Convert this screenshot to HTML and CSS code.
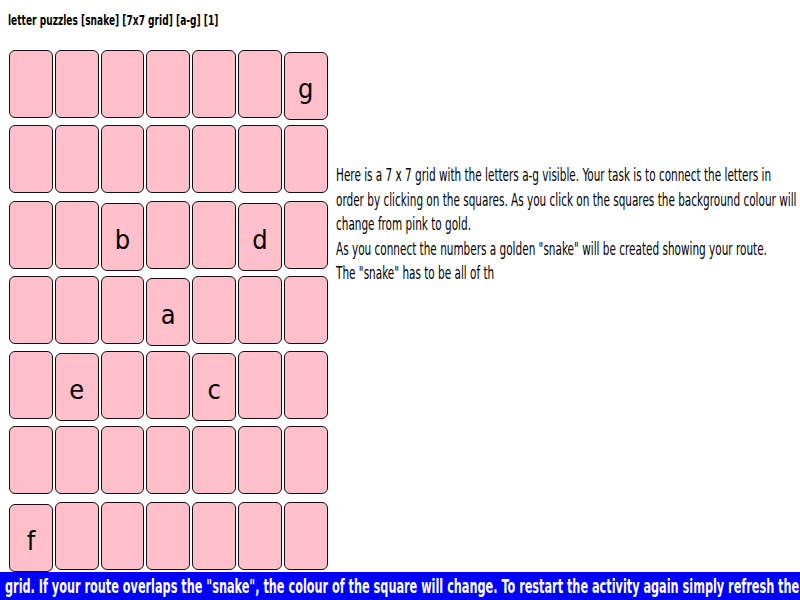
FILE: index.html
```html
<!DOCTYPE html>
<html lang="en">
<head>
<meta charset="utf-8">
<title>letter puzzles [snake] [7x7 grid] [a-g] [1]</title>
<link rel="stylesheet" href="styles.css">
</head>
<body>
<div class="page">
  <div class="content">
    <div class="title"><span class="title-text">letter puzzles [snake] [7x7 grid] [a-g] [1]</span></div>
    <div class="main">
      <div class="grid">
        <div class="row">
          <div class="cell"></div><div class="cell"></div><div class="cell"></div><div class="cell"></div><div class="cell"></div><div class="cell"></div><div class="cell letter">g</div>
        </div>
        <div class="row">
          <div class="cell"></div><div class="cell"></div><div class="cell"></div><div class="cell"></div><div class="cell"></div><div class="cell"></div><div class="cell"></div>
        </div>
        <div class="row">
          <div class="cell"></div><div class="cell"></div><div class="cell letter">b</div><div class="cell"></div><div class="cell"></div><div class="cell letter">d</div><div class="cell"></div>
        </div>
        <div class="row">
          <div class="cell"></div><div class="cell"></div><div class="cell"></div><div class="cell letter">a</div><div class="cell"></div><div class="cell"></div><div class="cell"></div>
        </div>
        <div class="row">
          <div class="cell"></div><div class="cell letter">e</div><div class="cell"></div><div class="cell"></div><div class="cell letter">c</div><div class="cell"></div><div class="cell"></div>
        </div>
        <div class="row">
          <div class="cell"></div><div class="cell"></div><div class="cell"></div><div class="cell"></div><div class="cell"></div><div class="cell"></div><div class="cell"></div>
        </div>
        <div class="row">
          <div class="cell letter">f</div><div class="cell"></div><div class="cell"></div><div class="cell"></div><div class="cell"></div><div class="cell"></div><div class="cell"></div>
        </div>
      </div>
      <div class="info">
        <div class="info-text">
          <p class="line">Here is a 7 x 7 grid with the letters a-g visible. Your task is to connect the letters in</p>
          <p class="line">order by clicking on the squares. As you click on the squares the background colour will</p>
          <p class="line">change from pink to gold.</p>
          <p class="line">As you connect the numbers a golden "snake" will be created showing your route.</p>
          <p class="line">The "snake" has to be all of th</p>
        </div>
      </div>
    </div>
  </div>
  <div class="ticker"><span class="ticker-text">grid. If your route overlaps the "snake", the colour of the square will change. To restart the activity again simply refresh the</span></div>
</div>
</body>
</html>
```

FILE: styles.css
```css
html, body {
  margin: 0;
  padding: 0;
  background: #ffffff;
}

.page {
  display: flex;
  flex-direction: column;
  height: 100vh;
  overflow: hidden;
}

.content {
  flex: 1;
  padding: 12px 0 0 8px;
}

.title {
  font-family: "DejaVu Sans Condensed", "Liberation Sans", sans-serif;
  font-weight: bold;
  font-size: 14px;
  line-height: 16px;
  color: #000;
  white-space: nowrap;
}

.title-text {
  display: inline-block;
  transform: scaleX(0.72);
  transform-origin: left center;
}

.main {
  display: flex;
  align-items: flex-start;
  margin-top: 22px;
}

.grid {
  display: flex;
  flex-direction: column;
  gap: 7.3px;
  margin-left: 1px;
}

.row {
  display: flex;
  align-items: flex-start;
  gap: 2px;
}

.cell {
  box-sizing: border-box;
  width: 43.8px;
  height: 68px;
  background: #ffc0cb;
  border: 1.6px solid #111;
  border-radius: 6px;
}

.letter {
  margin-top: 2px;
  margin-bottom: -2px;
  text-align: center;
  font-family: "DejaVu Sans Condensed", "Liberation Sans", sans-serif;
  font-size: 27px;
  line-height: 72px;
  color: #000;
}

.info {
  margin-left: 8px;
  padding-top: 113px;
  font-family: "DejaVu Sans Condensed", "Liberation Sans", sans-serif;
  font-size: 17px;
  line-height: 24.5px;
  color: #000;
  white-space: nowrap;
}

.info-text {
  transform: scaleX(0.685);
  transform-origin: left top;
}

.line {
  margin: 0;
}

.ticker {
  height: 28px;
  background: #0000ff;
  overflow: hidden;
  white-space: nowrap;
  padding-left: 5px;
}

.ticker-text {
  display: inline-block;
  transform: scaleX(0.66);
  transform-origin: left center;
  font-family: "DejaVu Sans Condensed", "Liberation Sans", sans-serif;
  font-weight: bold;
  font-size: 19px;
  line-height: 28px;
  color: #ffffff;
}
```
